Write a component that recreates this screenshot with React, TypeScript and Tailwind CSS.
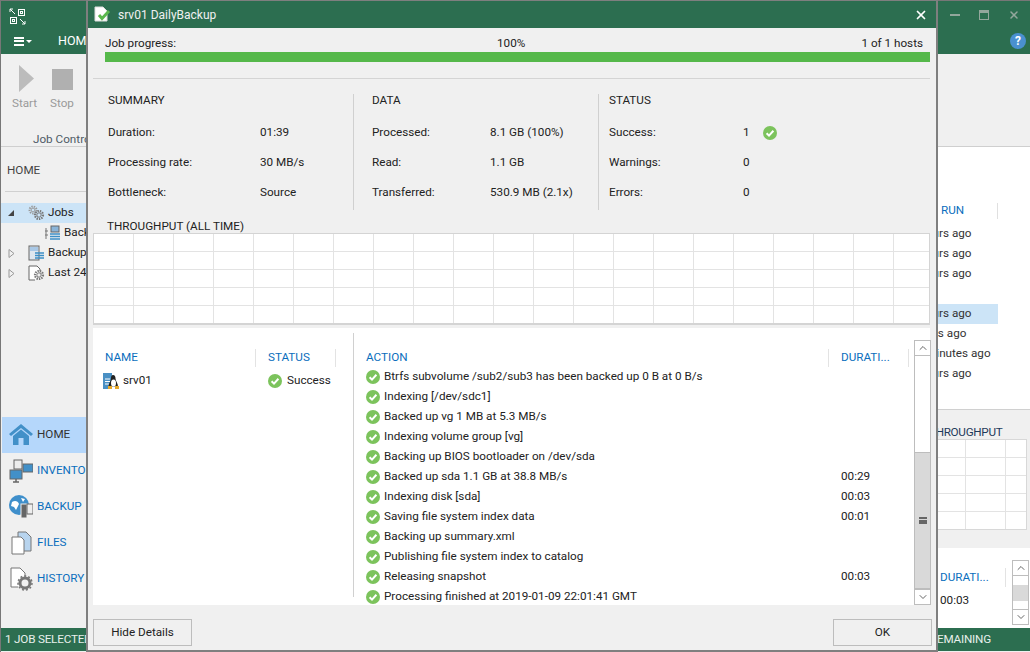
import { ChevronUp, ChevronDown, X } from 'lucide-react';

const font = { fontFamily: 'Roboto, "Noto Sans", sans-serif' };

const actions = [
  { text: 'Btrfs subvolume /sub2/sub3 has been backed up 0 B at 0 B/s', time: '' },
  { text: 'Indexing [/dev/sdc1]', time: '' },
  { text: 'Backed up vg 1 MB at 5.3 MB/s', time: '' },
  { text: 'Indexing volume group [vg]', time: '' },
  { text: 'Backing up BIOS bootloader on /dev/sda', time: '' },
  { text: 'Backed up sda 1.1 GB at 38.8 MB/s', time: '00:29' },
  { text: 'Indexing disk [sda]', time: '00:03' },
  { text: 'Saving file system index data', time: '00:01' },
  { text: 'Backing up summary.xml', time: '' },
  { text: 'Publishing file system index to catalog', time: '' },
  { text: 'Releasing snapshot', time: '00:03' },
  { text: 'Processing finished at 2019-01-09 22:01:41 GMT', time: '' },
];

function CheckIcon({ size = 14 }: { size?: number }) {
  return (
    <svg width={size} height={size} viewBox="0 0 14 14" className="shrink-0">
      <circle cx="7" cy="7" r="7" fill="#7cc35c" />
      <path d="M3.6 7.2 6 9.6 10.4 4.8" fill="none" stroke="#fff" strokeWidth="2" />
    </svg>
  );
}

function Gear({ x, y, r, color = '#777' }: { x: number; y: number; r: number; color?: string }) {
  return (
    <g>
      <circle cx={x} cy={y} r={r} fill="none" stroke={color} strokeWidth={r * 0.55} strokeDasharray="1.4 1" />
      <circle cx={x} cy={y} r={r * 0.55} fill="none" stroke={color} strokeWidth="1" />
    </g>
  );
}

function GridChart({ width, offset = 0 }: { width: number; offset?: number }) {
  const cols = [];
  for (let x = offset; x < width; x += 40) cols.push(x);
  return (
    <svg width={width} height={89} className="block bg-white">
      {cols.map((x) => (
        <line key={x} x1={x + 0.5} y1={0} x2={x + 0.5} y2={89} stroke="#e3e3e3" />
      ))}
      {[17, 35, 53, 71].map((y) => (
        <line key={y} x1={0} y1={y + 0.5} x2={width} y2={y + 0.5} stroke="#e3e3e3" />
      ))}
    </svg>
  );
}

function TreeRow({ icon, label, arrow, indent = false, selected = false }: { icon: React.ReactNode; label: string; arrow?: 'open' | 'closed'; indent?: boolean; selected?: boolean }) {
  return (
    <div className={`h-5 flex items-center pl-[7px] whitespace-nowrap ${selected ? 'bg-[#cce4f7]' : ''}`}>
      <span className="w-5 shrink-0">
        {arrow === 'open' && (
          <svg width="7" height="7" viewBox="0 0 7 7"><path d="M6 0v6H0z" fill="#444" /></svg>
        )}
        {arrow === 'closed' && (
          <svg width="7" height="9" viewBox="0 0 7 9"><path d="M1 .5 6 4.500 1 8.500z" fill="none" stroke="#999" /></svg>
        )}
      </span>
      {indent && <span className="w-4 shrink-0" />}
      <span className="w-5 shrink-0 flex">{icon}</span>
      <span>{label}</span>
    </div>
  );
}

function NavRow({ icon, label, selected = false }: { icon: React.ReactNode; label: string; selected?: boolean }) {
  return (
    <div className={`h-9 flex items-center pl-[7px] ml-px whitespace-nowrap ${selected ? 'bg-[#b5d7fb] text-[#333]' : 'text-[#0a6ebd]'}`}>
      <span className="w-7 shrink-0 flex">{icon}</span>
      <span>{label}</span>
    </div>
  );
}

function ScrollButton({ up }: { up: boolean }) {
  const Icon = up ? ChevronUp : ChevronDown;
  return (
    <div className="h-4 w-[17px] bg-white border border-[#bdbdbd] flex items-center justify-center shrink-0">
      <Icon size={12} color="#666" />
    </div>
  );
}

function StatRow({ label, value, cols, extra }: { label: string; value: string; cols: string; extra?: React.ReactNode }) {
  return (
    <div className={`grid ${cols} h-[30px] items-center`}>
      <span>{label}</span>
      <span className="flex items-center gap-[13px]">{value}{extra}</span>
    </div>
  );
}

function Background() {
  return (
    <div className="absolute inset-0 flex flex-col bg-[#f0f0f0] border-l border-t border-[#777]">
      <header className="h-[53px] bg-[#2c6e50] shrink-0 flex flex-col text-white">
        <div className="h-[27px] flex items-center justify-between pl-[8px] pr-[10px]">
          <svg width="17" height="17" viewBox="0 0 17 17" fill="none" stroke="#fff" strokeWidth="1" className="mt-[3px]">
            <path d="M1 1 6 6M1 4V1h3M16 16 11 11M16 13v3h-3" />
            <rect x="9.500" y="1.500" width="6" height="6" />
            <rect x="11.500" y="3.500" width="2" height="2" />
            <rect x="1.500" y="9.500" width="6" height="6" />
            <rect x="3.500" y="11.500" width="2" height="2" />
          </svg>
          <div className="flex items-center gap-[19px] text-[#93a79c]">
            <span className="w-[10px] h-[2px] bg-[#93a79c]" />
            <span className="w-[10px] h-[10px] border border-[#93a79c] border-t-[3px]" />
            <X size={12} strokeWidth={3} />
          </div>
        </div>
        <div className="flex-1 flex items-center justify-between pl-[13px] pr-[4px]">
          <div className="flex items-center">
            <span className="w-[10px] h-[9px] border-y-2 border-white relative after:absolute after:left-0 after:right-0 after:top-[1.500px] after:h-[2px] after:bg-white" />
            <span className="ml-[2px] w-0 h-0 border-x-[3px] border-t-[3px] border-x-transparent border-t-white" />
            <span className="ml-[26px] text-[12.500px]">HOME</span>
          </div>
          <span className="w-4 h-4 rounded-full bg-[#4a90d0] flex items-center justify-center text-[12px] font-bold">?</span>
        </div>
      </header>

      <section className="h-[93px] shrink-0 border-b border-[#cfcfcf] text-[#9a9a9a]">
        <div className="flex pl-[11px] pt-[11px]">
          <div className="w-[38px] flex flex-col items-start">
            <svg width="24" height="28" viewBox="0 0 24 28" className="ml-[6px]"><path d="M1 0 16 13.500 1 27z" fill="#bcbcbc" /></svg>
            <span className="mt-[2px]">Start</span>
          </div>
          <div className="w-[38px] flex flex-col items-start">
            <span className="w-[21px] h-[21px] bg-[#b0b0b0] ml-[2px] mt-[4px] mb-[3px]" />
            <span className="mt-[2px]">Stop</span>
          </div>
        </div>
        <div className="pl-[32px] pt-[18px] text-[#4f5b66] whitespace-nowrap">Job Control</div>
      </section>

      <main className="flex-1 flex justify-between min-h-0">
        <div className="w-[85px] flex flex-col">
          <div className="h-[45px] flex items-center pl-[2px] pt-[3px] text-[#444] border-b border-[#d0d0d0] ml-1 shrink-0">HOME</div>
          <div className="pt-[11px] h-[225px] shrink-0 text-[#222]">
            <TreeRow selected arrow="open" label="Jobs" icon={
              <svg width="18" height="16" viewBox="0 0 18 16"><Gear x={5} y={5} r={3.500} color="#999" /><Gear x={11} y={10} r={4} /></svg>
            } />
            <TreeRow indent label="Backup" icon={
              <svg width="18" height="16" viewBox="0 0 18 16">
                <path d="M2 3v11M1 6h3M1 10h3" stroke="#777" />
                <rect x="7" y="1" width="8" height="6" fill="#8ab4d8" stroke="#666" />
                <path d="M6 9h10M6 11.500h10M6 14h10" stroke="#3d8fc6" strokeWidth="1.500" />
              </svg>
            } />
            <TreeRow arrow="closed" label="Backups" icon={
              <svg width="18" height="16" viewBox="0 0 18 16">
                <rect x="1" y="1" width="10" height="14" fill="#dfe7ef" stroke="#666" />
                <rect x="2" y="2" width="8" height="4" fill="#a9c8e6" />
                <path d="M7 8h9M7 10.500h9M7 13h9" stroke="#3d8fc6" strokeWidth="1.500" />
              </svg>
            } />
            <TreeRow arrow="closed" label="Last 24 hours" icon={
              <svg width="18" height="16" viewBox="0 0 18 16">
                <path d="M7 15H1V1h8l3 3v2" fill="#fff" stroke="#666" />
                <Gear x={11} y={10} r={4} />
              </svg>
            } />
          </div>
          <div className="text-[#333]">
            <NavRow selected label="HOME" icon={
              <svg width="24" height="24" viewBox="0 0 24 24"><path d="M0 11 12 1 24 11 22 13 12 5 2 13z M4 13 12 6.500 20 13V22H14.500V15H9.500V22H4z" fill="#4290c8" /></svg>
            } />
            <NavRow label="INVENTORY" icon={
              <svg width="24" height="24" viewBox="0 0 24 24">
                <rect x="5" y="1" width="8" height="9" fill="#eee" stroke="#666" />
                <rect x="14" y="5" width="10" height="8" fill="#4290c8" stroke="#666" />
                <rect x="1" y="11" width="12" height="9" fill="#4290c8" stroke="#666" />
                <path d="M4 23h6M7 20v3" stroke="#666" strokeWidth="1.500" />
              </svg>
            } />
            <NavRow label="BACKUP" icon={
              <svg width="24" height="24" viewBox="0 0 24 24">
                <circle cx="10" cy="10" r="10" fill="#3f8fcb" />
                <path d="M3 7c3-2 6-1 7 2l-3 6-2-3-3-1zM12 3l4 1-2 3z" fill="#fff" />
                <rect x="12" y="9" width="6" height="14" fill="#666" stroke="#eee" />
                <rect x="18" y="9" width="6" height="10" fill="#eee" stroke="#666" />
              </svg>
            } />
            <NavRow label="FILES" icon={
              <svg width="24" height="24" viewBox="0 0 24 24">
                <path d="M9 1h8l5 5v14H9z" fill="#b8d4ee" stroke="#777" />
                <path d="M3 6h9l3 3v14H3z" fill="#fff" stroke="#777" />
              </svg>
            } />
            <NavRow label="HISTORY" icon={
              <svg width="24" height="24" viewBox="0 0 24 24">
                <path d="M9 20H2V1h9l5 5v4" fill="#fff" stroke="#777" />
                <circle cx="16" cy="16" r="5" fill="none" stroke="#777" strokeWidth="3" />
                <circle cx="16" cy="16" r="7" fill="none" stroke="#777" strokeWidth="1.500" strokeDasharray="2 2" />
              </svg>
            } />
          </div>
        </div>

        <div className="w-[130px] flex flex-col shrink-0">
          <div className="h-[263px] bg-white border-b border-[#d0d0d0] shrink-0 pt-[54px]">
            <div className="flex h-5 items-center text-[#0a6ebd]">
              <span className="w-[97px] pl-[41px]">RUN</span>
              <span className="w-px h-4 bg-[#e0e0e0]" />
            </div>
            <div className="pt-[3px] text-[#333] whitespace-nowrap">
              {['5 hours ago', '5 hours ago', '5 hours ago', '', '5 hours ago', '2 days ago', '10 minutes ago', '5 hours ago'].map((t, i) => (
                <div key={i} className={`h-5 w-[98px] flex items-center pl-[10px] ${i === 4 ? 'bg-[#cce4f7]' : ''}`}>{t}</div>
              ))}
            </div>
          </div>
          <div className="pt-[14px] h-[138px] shrink-0">
            <div className="text-[#1f3a5a] whitespace-nowrap h-4 leading-4 pl-[29px] tracking-[-0.3px]">THROUGHPUT</div>
            <div className="-mt-px ml-[8px] w-[119px] border border-[#d8d8d8]">
              <GridChart width={117} offset={56} />
            </div>
          </div>
          <div className="flex-1 bg-white flex pl-[40px]">
            <div className="flex-1 pt-[20px] text-[#222]">
              <div className="h-[19px] leading-[19px] text-[#0a6ebd] w-[66px] border-r border-[#e3e3e3]">DURATI...</div>
              <div className="pt-[5px]">00:03</div>
            </div>
            <div className="w-[17px] mr-px mt-[12px] mb-[3px] flex flex-col">
              <ScrollButton up />
              <div className="flex-1 border-x border-[#bdbdbd] flex flex-col justify-center">
                <div className="h-4 bg-[#d9d9d9]" />
              </div>
              <ScrollButton up={false} />
            </div>
          </div>
        </div>
      </main>

      <footer className="h-[23px] mb-px bg-[#2c6e50] shrink-0 flex items-center justify-between text-[#e8f0ec] pl-[4px] pr-[39px] tracking-[-0.2px]">
        <span>1 JOB SELECTED</span>
        <span>REMAINING</span>
      </footer>
    </div>
  );
}

function Dialog() {
  return (
    <div className="absolute left-[86px] top-0 w-[852px] h-[652px] bg-[#f0f0f0] border-x-2 border-t border-b-2 border-[#7f7f7f] flex flex-col">
      <div className="h-[27px] bg-[#2c6e50] shrink-0 flex items-center justify-between pl-[6px] pr-[8px] text-[#f0f0f0]">
        <div className="flex items-center gap-[7px]">
          <svg width="17" height="17" viewBox="0 0 17 17">
            <path d="M1 1h8l4 4v10H1z" fill="#fff" stroke="#ddd" />
            <path d="M5 9 8 12.500 15 5" fill="none" stroke="#5bb84d" strokeWidth="3" />
          </svg>
          <span className="text-[12px]">srv01 DailyBackup</span>
        </div>
        <X size={14} strokeWidth={3} color="#fff" />
      </div>

      <div className="pl-[17px] pr-[6px] pt-[8px] shrink-0">
        <div className="flex justify-between h-[15px] leading-[15px] text-[#222] pr-[7px]">
          <span className="w-[392px]">Job progress:</span>
          <span className="flex-1">100%</span>
          <span>1 of 1 hosts</span>
        </div>
        <div className="h-[10px] bg-[#55b84a] mt-px" />
      </div>
      <div className="mt-4 ml-[5px] mr-[6px] h-px bg-[#d4d4d4] shrink-0" />

      <div className="flex h-[131px] pt-[15px] ml-[5px] shrink-0 text-[#222]">
        <div className="w-[261px] pl-[15px] border-r border-[#d0d0d0]">
          <div className="h-[12px] leading-[12px]">SUMMARY</div>
          <div className="mt-[12px]">
            <StatRow label="Duration:" value="01:39" cols="grid-cols-[152px_1fr]" />
            <StatRow label="Processing rate:" value="30 MB/s" cols="grid-cols-[152px_1fr]" />
            <StatRow label="Bottleneck:" value="Source" cols="grid-cols-[152px_1fr]" />
          </div>
        </div>
        <div className="w-[245px] pl-[18px] border-r border-[#d0d0d0]">
          <div className="h-[12px] leading-[12px]">DATA</div>
          <div className="mt-[12px]">
            <StatRow label="Processed:" value="8.1 GB (100%)" cols="grid-cols-[118px_1fr]" />
            <StatRow label="Read:" value="1.1 GB" cols="grid-cols-[118px_1fr]" />
            <StatRow label="Transferred:" value="530.9 MB (2.1x)" cols="grid-cols-[118px_1fr]" />
          </div>
        </div>
        <div className="pl-[10px] flex-1">
          <div className="h-[12px] leading-[12px]">STATUS</div>
          <div className="mt-[12px]">
            <StatRow label="Success:" value="1" cols="grid-cols-[134px_1fr]" extra={<CheckIcon />} />
            <StatRow label="Warnings:" value="0" cols="grid-cols-[134px_1fr]" />
            <StatRow label="Errors:" value="0" cols="grid-cols-[134px_1fr]" />
          </div>
        </div>
      </div>

      <div className="pl-[19px] h-[15px] leading-[15px] mt-[9px] text-[#222] shrink-0">THROUGHPUT (ALL TIME)</div>
      <div className="ml-[5px] mr-[6px] border border-[#d4d4d4] border-b-2 shrink-0 -mt-px overflow-hidden">
        <GridChart width={835} offset={39} />
      </div>

      <div className="ml-[5px] mr-[6px] mt-[3px] h-[277px] bg-white flex shrink-0 text-[#222]">
        <div className="w-[261px] shrink-0 mt-[5px] mb-[8px] border-r border-[#d0d0d0]">
          <div className="flex h-[22px] mt-[14px] items-center text-[#0a6ebd]">
            <span className="w-[163px] pl-[12px] border-r border-[#e3e3e3]">NAME</span>
            <span className="w-[80px] pl-[12px] border-r border-[#e3e3e3]">STATUS</span>
          </div>
          <div className="flex h-[20px] items-center mt-[2px]">
            <span className="w-[163px] pl-[10px] flex items-center gap-[4px]">
              <svg width="16" height="16" viewBox="0 0 16 16">
                <rect x="0" y="0" width="9" height="16" fill="#4a90c4" />
                <path d="M2 6h5M2 8.500h5M2 11h5" stroke="#fff" />
                <path d="M10 2c2 0 2.500 2 2.500 3.500 0 2 2.500 5 2.500 8H5.500C5.500 10 8 8 8 5.500 8 3.500 8.500 2 10 2z" fill="#222" />
                <ellipse cx="10.500" cy="10" rx="2.500" ry="3.500" fill="#fff" />
                <path d="M5 13h4v3H5zM12 13h4v3h-4z" fill="#e7a92b" />
              </svg>
              srv01
            </span>
            <span className="pl-[12px] flex items-center gap-[5px]"><CheckIcon />Success</span>
          </div>
        </div>
        <div className="flex-1 flex min-w-0">
          <div className="flex-1 pl-[12px] min-w-0">
            <div className="flex h-[22px] mt-[19px] items-center text-[#0a6ebd]">
              <span className="w-[463px] border-r border-[#e3e3e3]">ACTION</span>
              <span className="w-[80px] pl-[12px] border-r border-[#e3e3e3]">DURATI...</span>
            </div>
            <div className="-mt-[2px]">
              {actions.map((a) => (
                <div key={a.text} className="flex h-5 items-center">
                  <span className="w-[463px] flex items-center gap-[4px] whitespace-nowrap"><CheckIcon />{a.text}</span>
                  <span className="pl-[12px]">{a.time}</span>
                </div>
              ))}
            </div>
          </div>
          <div className="w-[17px] -mr-px mt-[12px] flex flex-col shrink-0">
            <ScrollButton up />
            <div className="h-[96px] border-x border-[#bdbdbd]" />
            <div className="h-[137px] bg-[#d9d9d9] border border-[#bdbdbd] flex items-center justify-center">
              <span className="w-2 h-[7px] border-y-2 border-[#666] relative after:absolute after:left-0 after:right-0 after:top-[0.5px] after:h-[2px] after:bg-[#666]" />
            </div>
            <ScrollButton up={false} />
          </div>
        </div>
      </div>

      <div className="flex justify-between ml-[5px] mr-[4px] mt-[14px] text-[#222]">
        <div className="w-[99px] h-[27px] border border-[#bdbdbd] flex items-center justify-center">Hide Details</div>
        <div className="w-[99px] h-[27px] border border-[#bdbdbd] flex items-center justify-center">OK</div>
      </div>
    </div>
  );
}

export default function App() {
  return (
    <div className="relative w-[1030px] h-[652px] overflow-hidden text-[11.7px] bg-white" style={font}>
      <Background />
      <Dialog />
    </div>
  );
}
